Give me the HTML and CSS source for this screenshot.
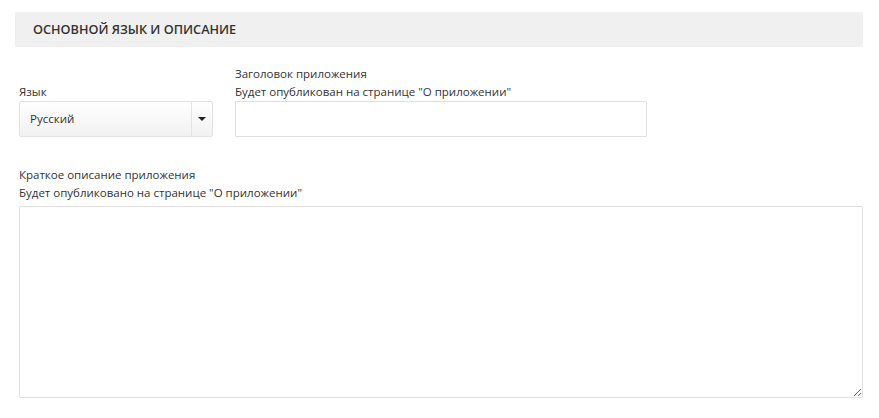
FILE: index.html
```html
<!DOCTYPE html>
<html lang="ru">
<head>
  <meta charset="UTF-8">
  <meta name="viewport" content="width=device-width, initial-scale=1.0">
  <title>Основной язык и описание</title>
  <link rel="stylesheet" href="styles.css">
</head>
<body>
  <div class="page">
    <h2 class="section-title">Основной язык и описание</h2>
    <form class="app-form">
      <div class="row">
        <div class="field field-lang">
          <label for="lang">Язык</label>
          <div class="select">
            <span class="select-value">Русский</span>
            <span class="select-toggle"><span class="caret"></span></span>
          </div>
        </div>
        <div class="field field-title">
          <label for="appTitle">Заголовок приложения<br>Будет опубликован на странице "О приложении"</label>
          <input type="text" id="appTitle">
        </div>
      </div>
      <div class="field field-desc">
        <label for="appDesc">Краткое описание приложения<br>Будет опубликовано на странице "О приложении"</label>
        <textarea id="appDesc"></textarea>
      </div>
    </form>
  </div>
</body>
</html>
```

FILE: styles.css
```css
body {
  font-family: "Open Sans", Arial, sans-serif;
  font-size: 11.5px;
  color: #333;
  margin: 0;
  padding: 0;
  background-color: #fff;
}
.page {
  padding: 12px 16px 0 15px;
}
.section-title {
  margin: 0;
  height: 35px;
  line-height: 35px;
  padding: 0 18px;
  background-color: #f0f0f0;
  font-size: 12.7px;
  font-weight: 600;
  text-transform: uppercase;
  color: #333;
}
.app-form {
  padding: 18px 0 0 4px;
}
.row {
  display: flex;
  align-items: flex-end;
  gap: 22px;
}
label {
  display: block;
  line-height: 18px;
}
.field-lang {
  width: 194px;
}
.field-title {
  width: 412px;
}
.select {
  display: flex;
  height: 36px;
  box-sizing: border-box;
  border: 1px solid #e3e3e3;
  border-radius: 2px;
  background: linear-gradient(#ffffff, #f1f1f1);
}
.select-value {
  flex: 1;
  line-height: 34px;
  padding-left: 10px;
}
.select-toggle {
  width: 20px;
  border-left: 1px solid #e3e3e3;
  display: flex;
  align-items: center;
  justify-content: center;
}
.caret {
  width: 0;
  height: 0;
  border-left: 4px solid transparent;
  border-right: 4px solid transparent;
  border-top: 4px solid #222;
}
input[type="text"],
textarea {
  display: block;
  width: 100%;
  box-sizing: border-box;
  border: 1px solid #e0e0e0;
  border-radius: 1px;
  font-family: inherit;
  font-size: 12px;
  background-color: #fff;
}
input[type="text"] {
  height: 36px;
  padding: 0 10px;
}
.field-desc {
  margin-top: 29px;
}
.field-desc label {
  margin-bottom: 4px;
}
textarea {
  height: 192px;
  padding: 8px 10px;
}
```
